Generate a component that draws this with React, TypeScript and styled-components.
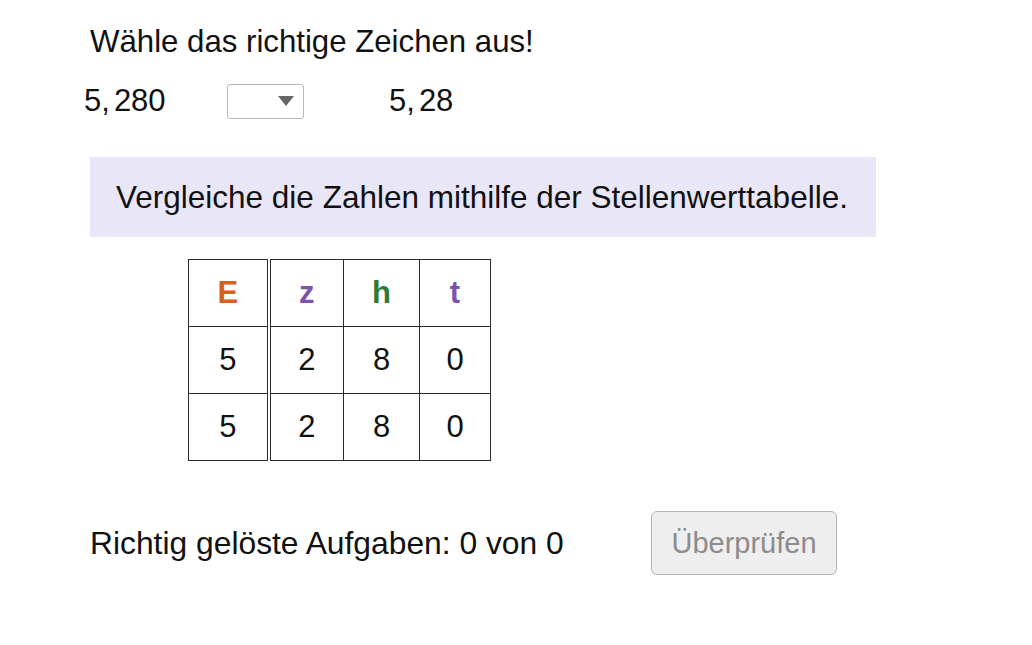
import styled, { createGlobalStyle } from "styled-components";

const GlobalStyle = createGlobalStyle`
  html, body {
    margin: 0;
    padding: 0;
    background: #ffffff;
  }

  body {
    font-family: "Liberation Sans", Arial, sans-serif;
    color: #111111;
  }
`;

const Page = styled.main`
  width: 1032px;
  height: 645px;
  box-sizing: border-box;
  padding: 24px 0 0 90px;

  display: flex;
  flex-direction: column;
  align-items: flex-start;
`;

const Heading = styled.p`
  margin: 0;
  font-size: 31.2px;
  line-height: 36px;
`;

const CompareRow = styled.div`
  display: flex;
  flex-direction: row;
  align-items: center;

  margin: 23px 0 0 -6px;
  height: 36px;
`;

const Number = styled.span<{ $width?: number }>`
  font-size: 31px;
  width: ${(p) => (p.$width ? `${p.$width}px` : "auto")};
`;

const Comma = styled.span`
  margin-right: 4px;
`;

const Select = styled.div`
  width: 77px;
  height: 35px;
  box-sizing: border-box;
  margin-right: 85px;

  border: 1px solid #b8b8b8;
  border-radius: 3px;
  background: #ffffff;

  display: flex;
  align-items: center;
  justify-content: flex-end;
  padding-right: 9px;
`;

const Arrow = styled.span`
  width: 0;
  height: 0;
  border-left: 8px solid transparent;
  border-right: 8px solid transparent;
  border-top: 10px solid #666666;
`;

const Hint = styled.div`
  margin-top: 38px;
  width: 786px;
  height: 80px;
  box-sizing: border-box;
  padding: 0 26px;

  background: #e9e6f8;

  display: flex;
  align-items: center;

  font-size: 31.5px;
`;

const PlaceTable = styled.table`
  margin: 22px 0 0 98px;
  border-collapse: collapse;
  table-layout: fixed;
  font-size: 31px;
`;

const Cell = styled.td<{ $width: number; $double?: boolean }>`
  width: ${(p) => p.$width}px;
  height: 67px;
  padding: 0;
  box-sizing: border-box;
  text-align: center;

  border: 1px solid #2a2a2a;
  border-right: ${(p) => (p.$double ? "4px double #2a2a2a" : "1px solid #2a2a2a")};
`;

const HeadCell = styled(Cell).attrs({ as: "th" })<{ $color: string }>`
  color: ${(p) => p.$color};
  font-weight: 700;
`;

const Footer = styled.div`
  margin-top: 50px;
  display: flex;
  flex-direction: row;
  align-items: center;
`;

const Score = styled.span`
  font-size: 31.8px;
  width: 561px;
`;

const CheckButton = styled.button`
  width: 186px;
  height: 64px;
  box-sizing: border-box;

  border: 1px solid #b4b4b4;
  border-radius: 6px;
  background: #eeeeee;

  font-family: inherit;
  font-size: 29px;
  color: #8c8c8c;
`;

const columns = [
  { label: "E", color: "#d4621e", width: 80, double: true },
  { label: "z", color: "#7b52ae", width: 75 },
  { label: "h", color: "#2e7a34", width: 76 },
  { label: "t", color: "#7b52ae", width: 71 },
];

const rows = [
  ["5", "2", "8", "0"],
  ["5", "2", "8", "0"],
];

const App: React.FC = () => {
  return (
    <>
      <GlobalStyle />
      <Page>
        <Heading>Wähle das richtige Zeichen aus!</Heading>

        <CompareRow>
          <Number $width={143}>
            5<Comma>,</Comma>280
          </Number>
          <Select>
            <Arrow />
          </Select>
          <Number>
            5<Comma>,</Comma>28
          </Number>
        </CompareRow>

        <Hint>Vergleiche die Zahlen mithilfe der Stellenwerttabelle.</Hint>

        <PlaceTable>
          <thead>
            <tr>
              {columns.map((c) => (
                <HeadCell key={c.label} $width={c.width} $double={c.double} $color={c.color}>
                  {c.label}
                </HeadCell>
              ))}
            </tr>
          </thead>
          <tbody>
            {rows.map((r, i) => (
              <tr key={i}>
                {r.map((digit, j) => (
                  <Cell key={j} $width={columns[j].width} $double={columns[j].double}>
                    {digit}
                  </Cell>
                ))}
              </tr>
            ))}
          </tbody>
        </PlaceTable>

        <Footer>
          <Score>Richtig gelöste Aufgaben: 0 von 0</Score>
          <CheckButton disabled>Überprüfen</CheckButton>
        </Footer>
      </Page>
    </>
  );
};

export default App;
